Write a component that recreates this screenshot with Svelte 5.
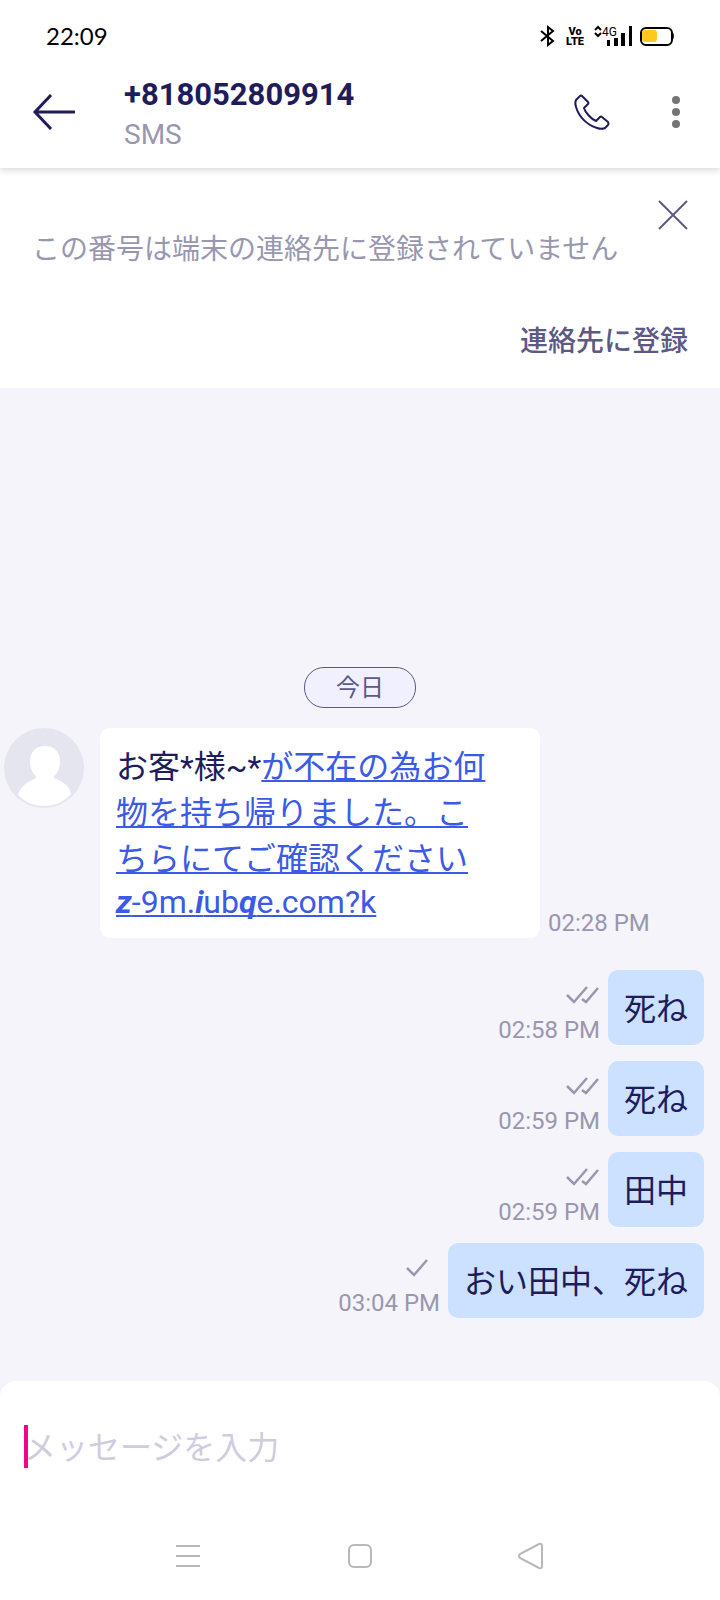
<script lang="ts">
  /**
   * SMS conversation screen: status bar, contact header, unknown-number
   * notice, message thread, composer and system navigation.
   */
  type SentMessage = {
    text: string;
    time: string;
    read: boolean;
  };

  const phoneNumber = '+818052809914';

  const sentMessages: SentMessage[] = [
    { text: '死ね', time: '02:58 PM', read: true },
    { text: '死ね', time: '02:59 PM', read: true },
    { text: '田中', time: '02:59 PM', read: true },
    { text: 'おい田中、死ね', time: '03:04 PM', read: false },
  ];

  let draft = $state('');
  let showNotice = $state(true);

  function closeNotice() {
    showNotice = false;
  }
</script>

<div class="screen">
  <div class="top">
    <div class="status-bar">
      <span class="clock">22:09</span>
      <div class="status-icons">
        <svg width="16" height="22" viewBox="0 0 16 22" aria-hidden="true">
          <path d="M1 6l12 10-5 4V2l5 4L1 16" fill="none" stroke="#000" stroke-width="2" />
        </svg>
        <svg width="22" height="22" viewBox="0 0 22 22" aria-label="VoLTE">
          <text class="tiny" x="11" y="10" text-anchor="middle">Vo</text>
          <text class="tiny" x="11" y="20" text-anchor="middle">LTE</text>
        </svg>
        <svg width="38" height="22" viewBox="0 0 38 22" aria-label="4G">
          <path d="M1 5l3-3 3 3M1 8l3 3 3-3" fill="none" stroke="#000" stroke-width="2" />
          <text class="network" x="8" y="11">4G</text>
          <path d="M13 15h3v6h-3zM20 13h4v8h-4zM27 8h4v13h-4zM35 1h3v20h-3z" />
        </svg>
        <svg class="battery" width="34" height="20" viewBox="0 0 34 20" aria-hidden="true">
          <rect x="1" y="2" width="31" height="17" rx="5" fill="none" stroke="#000" stroke-width="2" />
          <rect x="2" y="4" width="15" height="12" rx="3" fill="#ffc91f" />
          <path d="M32 6q2 1 2 4t-2 4z" />
        </svg>
      </div>
    </div>

    <header class="header">
      <button class="icon-btn" aria-label="戻る">
        <svg width="42" height="36" viewBox="0 0 42 36">
          <path d="M18 1L2 18l16 17M2 18h40" fill="none" stroke="#1f1c5c" stroke-width="3" />
        </svg>
      </button>
      <div class="contact">
        <h1>{phoneNumber}</h1>
        <p>SMS</p>
      </div>
      <button class="icon-btn" aria-label="電話をかける">
        <svg width="36" height="36" viewBox="0 0 36 36">
          <path
            d="M6 2L2 6C1 8 1 10 2 13C5 23 13 31 23 34C26 35 29 35 31 34L34 31Q35 30 34 28L28 23Q27 22 26 23L22 27C17 25 11 18 10 14L14 10Q15 9 14 8L8 2Q7 1 6 2Z"
            fill="none"
            stroke="#1f1c5c"
            stroke-width="2"
            stroke-linejoin="round"
          />
        </svg>
      </button>
      <button class="icon-btn menu-btn" aria-label="メニュー">
        <svg width="8" height="32" viewBox="0 0 8 32" fill="#757575">
          <circle cx="4" cy="4" r="4" />
          <circle cx="4" cy="16" r="4" />
          <circle cx="4" cy="28" r="4" />
        </svg>
      </button>
    </header>
  </div>

  {#if showNotice}
    <section class="notice">
      <div class="notice-row">
        <p>この番号は端末の連絡先に登録されていません</p>
        <button class="icon-btn" onclick={closeNotice} aria-label="閉じる">
          <svg width="30" height="30" viewBox="0 0 30 30">
            <path d="M1 1l28 28M29 1L1 29" fill="none" stroke="#5c5985" stroke-width="2" />
          </svg>
        </button>
      </div>
      <button class="register">連絡先に登録</button>
    </section>
  {/if}

  <main class="thread">
    <div class="day">今日</div>

    <div class="received">
      <svg class="avatar" width="80" height="80" viewBox="0 0 80 80" aria-hidden="true">
        <circle cx="40" cy="40" r="40" fill="#e5e5f0" />
        <path
          d="M41 18c9 0 15 6 15 15 0 7-2 11-5 14-2 2-1 3 1 4 8 3 14 8 15 15-7 8-16 12-27 12s-19-4-26-11c2-8 8-12 16-16 2-1 3-2 1-4-3-3-5-7-5-14 0-9 6-15 15-15z"
          fill="#fff"
        />
      </svg>
      <div class="bubble">
        お客*様~*<a href="#link">が不在の為お何<br />物を持ち帰りました。こ<br />ちらにてご確認ください</a>
        <a class="url" href="#link"><em>z</em>-9m.<em>i</em>ub<em>q</em>e.com?k</a>
      </div>
      <time>02:28 PM</time>
    </div>

    {#each sentMessages as message}
      <div class="sent">
        <div class="meta">
          <svg width="34" height="18" viewBox="0 0 34 18" fill="none" stroke="#9997b0" stroke-width="2.5">
            {#if message.read}
              <path d="M1 9l7 7L21 1M16 13l4 3L32 2" />
            {:else}
              <path d="M1 9l7 7L21 1" />
            {/if}
          </svg>
          <time>{message.time}</time>
        </div>
        <div class="bubble">{message.text}</div>
      </div>
    {/each}
  </main>

  <footer class="footer">
    <div class="composer">
      <span class="caret"></span>
      <input type="text" bind:value={draft} placeholder="メッセージを入力" aria-label="メッセージを入力" />
    </div>
    <nav class="system-nav">
      <button class="icon-btn" aria-label="履歴">
        <svg width="26" height="28" viewBox="0 0 26 28">
          <path d="M1 4h24M1 14h24M1 24h24" />
        </svg>
      </button>
      <button class="icon-btn" aria-label="ホーム">
        <svg width="26" height="28" viewBox="0 0 26 28">
          <rect x="2" y="3" width="22" height="22" rx="5" />
        </svg>
      </button>
      <button class="icon-btn" aria-label="戻る">
        <svg width="26" height="28" viewBox="0 0 26 28">
          <path d="M1 12Q-1 14 1 16L20 26Q23 27 23 24V4Q23 1 20 2Z" />
        </svg>
      </button>
    </nav>
  </footer>
</div>

<style>
  :global(body) {
    background: #f5f4fa;
  }

  .screen {
    display: flex;
    flex-direction: column;
    min-height: 100vh;
    font-family: Roboto, 'Noto Sans CJK JP', sans-serif;
    color: #1f1c5c;
  }

  h1,
  p {
    margin: 0;
  }

  svg {
    display: block;
    overflow: visible;
  }

  button {
    font: inherit;
    background: none;
    border: none;
    padding: 0;
    cursor: pointer;
  }

  .icon-btn {
    display: flex;
    align-items: center;
    justify-content: center;
  }

  .top {
    position: relative;
    background: #fff;
    box-shadow: 0 1px 8px rgba(0, 0, 0, 0.2);
  }

  /* Status bar */
  .status-bar {
    display: flex;
    align-items: center;
    justify-content: space-between;
    height: 72px;
    padding: 0 46px;
    color: #000;
  }

  .clock {
    padding-bottom: 2px;
    font-family: Lato, sans-serif;
    font-size: 24px;
  }

  .status-icons {
    display: flex;
    align-items: center;
    gap: 8px;
  }

  .tiny {
    font-size: 11px;
    font-weight: 900;
  }

  .network {
    font-size: 12px;
    font-weight: 400;
  }

  /* Header */
  .header {
    display: flex;
    align-items: flex-start;
    height: 96px;
    padding: 0 40px 0 33px;
  }

  .header .icon-btn {
    height: 80px;
  }

  .contact {
    flex: 1;
    padding: 3px 0 0 49px;
    line-height: 40px;
  }

  .contact h1 {
    font-size: 31px;
    font-weight: 700;
  }

  .contact p {
    font-size: 28px;
    color: #9997b0;
  }

  .menu-btn {
    margin-left: 62px;
  }

  /* Unknown number notice */
  .notice {
    display: flex;
    flex-direction: column;
    align-items: flex-end;
    padding: 32px 32px 26px;
    background: #fff;
    font-size: 28px;
    line-height: 40px;
  }

  .notice-row {
    display: flex;
    align-items: flex-start;
    justify-content: space-between;
    width: 100%;
    margin-bottom: 52px;
  }

  .notice-row p {
    padding-top: 30px;
    color: #9997b0;
  }

  .register {
    font-weight: 500;
    color: #5c5985;
  }

  /* Thread */
  .thread {
    flex: 1;
    display: flex;
    flex-direction: column;
    justify-content: flex-end;
    gap: 16px;
    padding: 24px 16px 63px 4px;
  }

  .day {
    align-self: center;
    margin: 0 0 4px 12px;
    padding: 2px 31px 0;
    border: 1px solid #5c5985;
    border-radius: 20px;
    background: #f0f0ff;
    font-size: 24px;
    line-height: 37px;
    color: #5c5985;
  }

  .bubble {
    padding: 18px 16px 14px;
    border-radius: 10px;
    font-size: 32px;
    line-height: 43px;
    background: #cce1ff;
  }

  .received {
    display: flex;
    align-items: flex-start;
    margin-bottom: 16px;
  }

  .received .bubble {
    flex: 0 1 440px;
    box-sizing: border-box;
    margin: 0 8px 0 16px;
    padding: 16px;
    line-height: 46px;
    background: #fff;
  }

  .received time {
    align-self: flex-end;
  }

  .received a {
    color: #3b5ae6;
    text-decoration: underline 2px;
    text-decoration-skip-ink: none;
    text-underline-offset: 2px;
  }

  .received .url {
    display: block;
    line-height: 40px;
  }

  .url em {
    font-weight: 700;
  }

  time {
    font-size: 24px;
    line-height: 30px;
    color: #9997b0;
  }

  .sent {
    display: flex;
    justify-content: flex-end;
    gap: 8px;
  }

  .meta {
    display: flex;
    flex-direction: column;
    justify-content: space-between;
    padding-top: 16px;
  }

  .meta svg {
    align-self: flex-end;
  }

  /* Composer and system navigation */
  .footer {
    border-radius: 16px 16px 0 0;
    background: #fff;
  }

  .composer {
    position: relative;
    padding: 44px 24px 52px;
  }

  .caret {
    position: absolute;
    top: 44px;
    left: 24px;
    width: 4px;
    height: 43px;
    background: #f5008b;
  }

  .composer input {
    display: block;
    box-sizing: border-box;
    width: 100%;
    height: 43px;
    padding: 2px 0 0;
    border: none;
    outline: none;
    background: none;
    font: inherit;
    font-size: 32px;
    color: inherit;
  }

  .composer input::placeholder {
    color: #cfcddd;
    opacity: 1;
  }

  .system-nav {
    display: flex;
    justify-content: center;
    gap: 146px;
    padding: 22px 0 30px;
  }

  .system-nav svg {
    fill: none;
    stroke: #b8b8b8;
    stroke-width: 2;
  }
</style>
